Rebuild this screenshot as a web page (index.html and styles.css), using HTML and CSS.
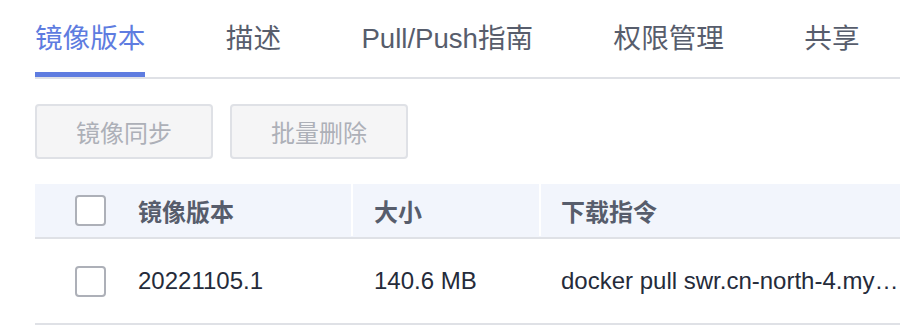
FILE: index.html
```html
<!DOCTYPE html>
<html lang="zh-CN">
<head>
<meta charset="utf-8">
<title>镜像版本</title>
<link rel="stylesheet" href="styles.css">
</head>
<body>
<div class="page">
  <nav class="tabs">
    <div class="tab active">镜像版本</div>
    <div class="tab">描述</div>
    <div class="tab">Pull/Push指南</div>
    <div class="tab">权限管理</div>
    <div class="tab">共享</div>
  </nav>
  <div class="toolbar">
    <button class="btn" disabled>镜像同步</button>
    <button class="btn" disabled>批量删除</button>
  </div>
  <div class="table">
    <div class="row head">
      <div class="cell c1"><span class="checkbox"></span><span>镜像版本</span></div>
      <div class="cell c2">大小</div>
      <div class="cell c3">下载指令</div>
    </div>
    <div class="row body">
      <div class="cell c1"><span class="checkbox"></span><span>20221105.1</span></div>
      <div class="cell c2">140.6 MB</div>
      <div class="cell c3"><span class="cmd">docker pull swr.cn-north-4.my…</span></div>
    </div>
  </div>
</div>
</body>
</html>
```

FILE: styles.css
```css
* { box-sizing: border-box; }
html, body { margin: 0; padding: 0; background: #fff; }
body {
  font-family: "Liberation Sans", "Noto Sans CJK SC", sans-serif;
  color: #252b3a;
  overflow: hidden;
}
.page { padding-left: 35px; width: 900px; }

.tabs {
  display: flex;
  gap: 80.4px;
  border-bottom: 2px solid #dfe1e6;
}
.tab {
  font-size: 27.6px;
  line-height: 40px;
  padding-top: 19px;
  padding-bottom: 13px;
  border-bottom: 5px solid transparent;
  color: #575d6c;
  white-space: nowrap;
}
.tab.active { color: #5e7ce0; border-bottom-color: #5e7ce0; }

.toolbar {
  display: flex;
  gap: 17px;
  margin-top: 25px;
}
.btn {
  width: 178px;
  height: 55px;
  font-family: inherit;
  font-size: 24px;
  color: #adb0b8;
  background: #f5f5f6;
  border: 2px solid #dfe1e6;
  border-radius: 4px;
  padding: 0;
}

.table { margin-top: 25px; }
.row {
  display: grid;
  grid-template-columns: 316px 188px 1fr;
  border-bottom: 2px solid #dfe1e6;
  font-size: 24px;
}
.row.head {
  height: 55px;
  background: #f2f5fc;
  color: #575d6c;
  font-weight: bold;
}
.row.body { height: 86px; color: #252b3a; }
.cell {
  display: flex;
  align-items: center;
  white-space: nowrap;
  overflow: hidden;
}
.c1 { padding-left: 40px; gap: 32px; }
.c2 { padding-left: 23px; }
.c3 { padding-left: 22px; }
.row.head .c2, .row.head .c3 { border-left: 2px solid #fff; padding-left: 21px; margin-bottom: 1px; }
.row.head .c3 { padding-left: 20px; }
.checkbox {
  width: 31px;
  height: 31px;
  border: 2px solid #adb0b8;
  border-radius: 4px;
  background: #fff;
  flex: none;
}
.cmd { overflow: hidden; }
```
